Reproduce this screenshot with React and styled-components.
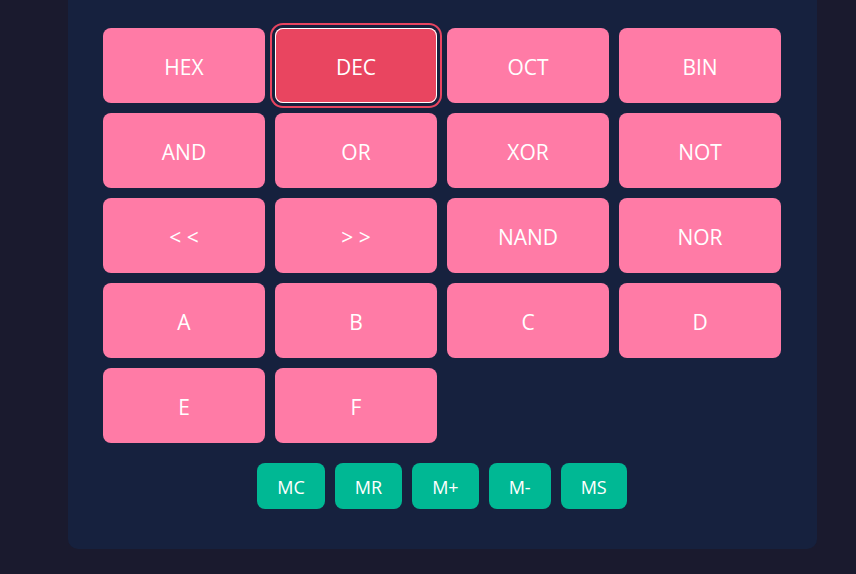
import React from "react";
import styled, { createGlobalStyle, css } from "styled-components";

const Global = createGlobalStyle`
  html, body { margin: 0; padding: 0; background: #1a1a2e; }
  body { font-family: "Open Sans", "Noto Sans", sans-serif; height: 574px; overflow: hidden; }
`;

const Page = styled.div`
  display: flex;
  padding-left: 68px;
`;

const Panel = styled.section`
  width: 749px;
  box-sizing: border-box;
  background: #16213e;
  border-radius: 0 0 10px 10px;
  padding: 28px 36px 40px 35px;
  display: flex;
  flex-direction: column;
  gap: 20px;
`;

const Grid = styled.div`
  display: grid;
  grid-template-columns: repeat(4, 162px);
  grid-auto-rows: 75px;
  gap: 10px;
`;

const Key = styled.button`
  border: none;
  border-radius: 8px;
  background: #ff7ba6;
  color: #ffffff;
  font-family: "Open Sans", "Noto Sans", sans-serif;
  font-size: 21px;
  cursor: pointer;
  padding: 2px 0 0;
  ${(p) =>
    p.$active &&
    css`
      background: #e94560;
      box-shadow: inset 0 0 0 1px #ffffff, 0 0 0 3px #16213e, 0 0 0 5px #e94560;
    `}
`;

const MemoryRow = styled.div`
  display: flex;
  justify-content: center;
  gap: 10px;
`;

const MemKey = styled.button`
  border: none;
  border-radius: 8px;
  background: #00b894;
  color: #ffffff;
  font-family: "Open Sans", "Noto Sans", sans-serif;
  font-size: 18px;
  height: 46px;
  padding: 1px 20px 0;
  cursor: pointer;
`;

const keys = [
  "HEX", "DEC", "OCT", "BIN",
  "AND", "OR", "XOR", "NOT",
  "<<", ">>", "NAND", "NOR",
  "A", "B", "C", "D",
  "E", "F",
];

const display = (k) => (k === "<<" ? "< <" : k === ">>" ? "> >" : k);

export default function App() {
  return (
    <>
      <Global />
      <Page>
        <Panel>
          <Grid>
            {keys.map((k) => (
              <Key key={k} $active={k === "DEC"}>
                {display(k)}
              </Key>
            ))}
          </Grid>
          <MemoryRow>
            {["MC", "MR", "M+", "M-", "MS"].map((m) => (
              <MemKey key={m}>{m}</MemKey>
            ))}
          </MemoryRow>
        </Panel>
      </Page>
    </>
  );
}
